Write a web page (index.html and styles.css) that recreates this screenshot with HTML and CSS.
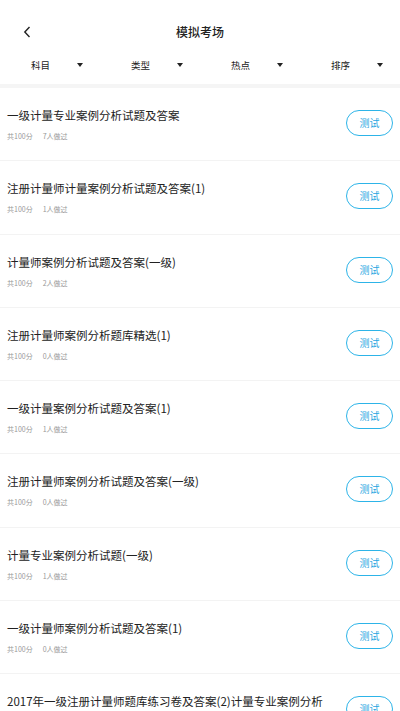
FILE: index.html
```html
<!DOCTYPE html>
<html lang="zh">
<head>
<meta charset="utf-8">
<link rel="stylesheet" href="styles.css">
</head>
<body>
<div class="page">
  <header class="topbar">
    <span class="back"><svg width="8" height="12" viewBox="0 0 8 12"><path d="M6.5 1 L1.8 6 L6.5 11" fill="none" stroke="#222" stroke-width="1.4"/></svg></span>
    <h1 class="title">模拟考场</h1>
  </header>
  <nav class="filters">
    <div class="filter"><span class="label">科目</span><span class="tri"></span></div>
    <div class="filter"><span class="label">类型</span><span class="tri"></span></div>
    <div class="filter"><span class="label">热点</span><span class="tri"></span></div>
    <div class="filter"><span class="label">排序</span><span class="tri"></span></div>
  </nav>
  <div class="band"></div>
  <ul class="list">
    <li class="item"><div class="info"><div class="name">一级计量专业案例分析试题及答案</div><div class="meta"><span>共100分</span><span>7人做过</span></div></div><button class="test">测试</button></li>
    <li class="item"><div class="info"><div class="name">注册计量师计量案例分析试题及答案(1)</div><div class="meta"><span>共100分</span><span>1人做过</span></div></div><button class="test">测试</button></li>
    <li class="item"><div class="info"><div class="name">计量师案例分析试题及答案(一级)</div><div class="meta"><span>共100分</span><span>2人做过</span></div></div><button class="test">测试</button></li>
    <li class="item"><div class="info"><div class="name">注册计量师案例分析题库精选(1)</div><div class="meta"><span>共100分</span><span>0人做过</span></div></div><button class="test">测试</button></li>
    <li class="item"><div class="info"><div class="name">一级计量案例分析试题及答案(1)</div><div class="meta"><span>共100分</span><span>1人做过</span></div></div><button class="test">测试</button></li>
    <li class="item"><div class="info"><div class="name">注册计量师案例分析试题及答案(一级)</div><div class="meta"><span>共100分</span><span>0人做过</span></div></div><button class="test">测试</button></li>
    <li class="item"><div class="info"><div class="name">计量专业案例分析试题(一级)</div><div class="meta"><span>共100分</span><span>1人做过</span></div></div><button class="test">测试</button></li>
    <li class="item"><div class="info"><div class="name">一级计量师案例分析试题及答案(1)</div><div class="meta"><span>共100分</span><span>0人做过</span></div></div><button class="test">测试</button></li>
    <li class="item"><div class="info"><div class="name">2017年一级注册计量师题库练习卷及答案(2)计量专业案例分析</div><div class="meta"><span>共100分</span><span>0人做过</span></div></div><button class="test">测试</button></li>
  </ul>
</div>
</body>
</html>
```
FILE: styles.css
```css
* { box-sizing: border-box; margin: 0; padding: 0; }
html, body { background: #fff; }
body { font-family: "Noto Sans CJK SC", "Noto Sans", sans-serif; color: #222; overflow: hidden; }
.page { width: 400px; }
.topbar { height: 48px; position: relative; display: flex; justify-content: center; padding-top: 24px; }
.back { position: absolute; left: 23px; top: 26px; display: flex; }
.title { font-size: 12px; line-height: 16px; font-weight: 500; color: #222; }
.filters { height: 36px; display: grid; grid-template-columns: repeat(4, 1fr); align-items: center; }
.filter { display: flex; align-items: center; padding-left: 31px; padding-bottom: 2px; }
.label { font-size: 9.5px; line-height: 12px; color: #222; width: 46px; }
.tri { width: 0; height: 0; border-left: 3.5px solid transparent; border-right: 3.5px solid transparent; border-top: 4px solid #222; }
.band { height: 4px; background: #f5f5f5; }
.list { list-style: none; }
.item { height: 73.3px; border-bottom: 1px solid #f3f3f3; display: flex; justify-content: space-between; align-items: flex-start; padding: 0 7px; }
.info { padding-top: 19px; width: 330px; }
.name { font-size: 11.5px; line-height: 16px; color: #222; white-space: nowrap; }
.meta { margin-top: 8px; font-size: 7px; line-height: 10px; color: #999; display: flex; gap: 10px; }
.test { margin-top: 22px; width: 47px; height: 26px; border: 1px solid #2db4e8; border-radius: 13px; background: #fff; color: #1fa6df; font-family: inherit; font-size: 10px; line-height: 24px; flex-shrink: 0; }
```
